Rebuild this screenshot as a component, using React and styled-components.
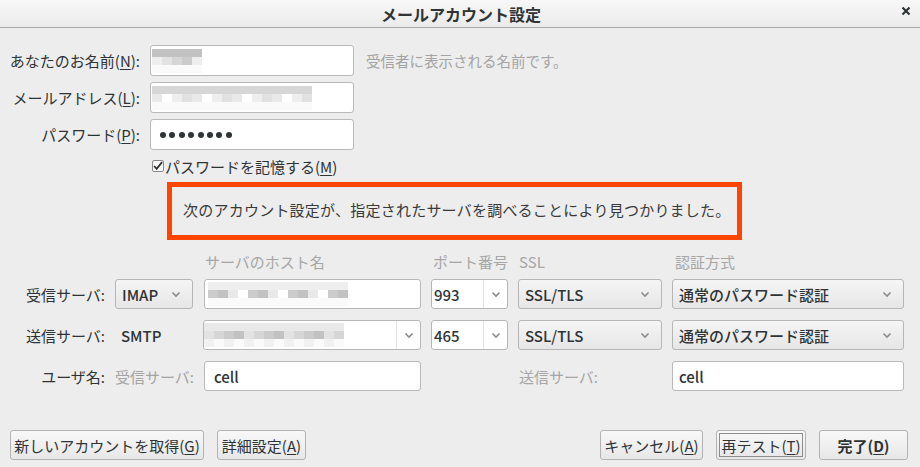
import React from 'react';
import styled, { createGlobalStyle } from 'styled-components';

const GlobalStyle = createGlobalStyle`
  html, body {
    margin: 0;
    padding: 0;
    background: #ededed;
  }
  body {
    font-family: "Noto Sans CJK JP", "Noto Sans", sans-serif;
    font-size: 15px;
    color: #2e3436;
  }
`;

const Window = styled.div`
  width: 920px;
  height: 467px;
  background: #ededed;
  display: flex;
  flex-direction: column;
  overflow: hidden;
`;

const TitleBar = styled.div`
  height: 27px;
  border-bottom: 1px solid #a9a9a9;
  background: linear-gradient(#f7f7f7, #ebebeb);
  display: flex;
  align-items: center;
  justify-content: center;
  position: relative;
`;

const Title = styled.div`
  font-weight: bold;
  font-size: 16px;
  color: #2e3436;
  line-height: 1;
  margin-left: 2px;
`;

const Close = styled.div`
  position: absolute;
  right: 9px;
  top: 5px;
  width: 11px;
  height: 11px;
  display: flex;
  align-items: center;
  justify-content: center;
`;

const Body = styled.div`
  flex: 1;
  display: flex;
  flex-direction: column;
  padding-top: 17px;
`;

const IdentityGrid = styled.div`
  display: grid;
  grid-template-columns: 140px 204px auto;
  grid-auto-rows: 31px;
  column-gap: 10px;
  row-gap: 6px;
  align-items: center;
`;

const Label = styled.div`
  text-align: right;
  white-space: nowrap;
  color: ${p => (p.muted ? '#a4a4a4' : '#2e3436')};
  font-size: 15px;
`;

const Hint = styled.div`
  color: #a4a4a4;
  font-size: 14.5px;
  margin-left: 2px;
`;

const Field = styled.div`
  height: ${p => p.h || 31}px;
  box-sizing: border-box;
  background: #fff;
  border: 1px solid #b9b9b9;
  border-radius: 3px;
  display: flex;
  align-items: center;
  padding-left: ${p => p.pad ?? 9}px;
  font-size: 15px;
  font-weight: 500;
  color: #2e3436;
  overflow: hidden;
  margin-left: ${p => p.shift || 0}px;
`;

const Dots = styled.div`
  display: flex;
  gap: 3.4px;
`;

const Dot = styled.span`
  width: 6px;
  height: 6px;
  border-radius: 50%;
  background: #2e3436;
`;

const Mosaic = styled.div`
  display: grid;
  grid-template-columns: repeat(${p => p.cols}, 10px);
  grid-auto-rows: 8px;
`;

const Cell = styled.span`
  background: ${p => p.shade};
`;

const CheckRow = styled.div`
  display: flex;
  align-items: center;
  padding-left: 152px;
  margin-top: 5px;
  height: 22px;
  font-size: 15px;
`;

const CheckBox = styled.span`
  width: 12px;
  height: 12px;
  box-sizing: border-box;
  border: 1px solid #8a8a8a;
  border-radius: 2px;
  background: #fafafa;
  display: inline-flex;
  align-items: center;
  justify-content: center;
  margin-right: 1px;
`;

const Key = styled.span`
  text-decoration: underline;
  text-underline-offset: 2px;
`;

const Notice = styled.div`
  margin: 5px 0 0 167px;
  width: 575px;
  height: 58px;
  box-sizing: border-box;
  border: 5px solid #ff4500;
  display: flex;
  align-items: center;
  padding: 0 0 4px 11px;
  font-size: 15px;
  letter-spacing: 0.23px;
  color: #3a3a3a;
  white-space: nowrap;
`;

const ServerGrid = styled.div`
  display: grid;
  grid-template-columns: 105px 78px 218px 77px 144px 232px;
  grid-template-rows: 14px 30px 30px 30px;
  column-gap: 10px;
  row-gap: 11px;
  align-items: center;
  margin-top: 14px;
`;

const ColHead = styled.div`
  color: #a6a6a6;
  font-size: 15px;
  padding-left: ${p => p.pad || 1}px;
  white-space: nowrap;
`;

const Plain = styled.div`
  font-weight: 500;
  font-size: 15px;
  padding-left: 6px;
`;

const Select = styled.div`
  height: 30px;
  box-sizing: border-box;
  border: 1px solid #b6b6b6;
  border-radius: 3px;
  background: linear-gradient(#f5f5f5, #e6e6e6);
  display: flex;
  align-items: center;
  justify-content: space-between;
  padding: 0 11px 0 6px;
  font-size: 15px;
  font-weight: 500;
  color: #2e3436;
  white-space: nowrap;
`;

const Combo = styled.div`
  height: 30px;
  box-sizing: border-box;
  border: 1px solid #b6b6b6;
  border-radius: 3px;
  background: #fff;
  display: flex;
  align-items: stretch;
  font-size: 15px;
  font-weight: 500;
  overflow: hidden;
`;

const ComboText = styled.div`
  flex: 1;
  display: flex;
  align-items: center;
  padding-left: ${p => p.pad ?? 2}px;
  overflow: hidden;
`;

const ComboButton = styled.div`
  width: 23px;
  border-left: 1px solid #e4e4e4;
  display: flex;
  align-items: center;
  justify-content: center;
`;

const ButtonBar = styled.div`
  margin-top: auto;
  margin-bottom: 7px;
  display: flex;
  align-items: center;
  padding: 0 12px 0 10px;
  gap: 13px;
`;

const Spacer = styled.div`
  flex: 1;
`;

const Button = styled.div`
  height: 30px;
  box-sizing: border-box;
  border: 1px solid #b3b3b3;
  border-radius: 3px;
  background: linear-gradient(#f8f8f8, #e7e7e7);
  display: flex;
  align-items: center;
  justify-content: center;
  width: ${p => p.w}px;
  font-size: 15px;
  font-weight: ${p => (p.bold ? 'bold' : 'normal')};
  color: #2e3436;
  white-space: nowrap;
  padding: 2px;
`;

const FocusRing = styled.div`
  width: 100%;
  height: 100%;
  box-sizing: border-box;
  border: 1px solid #8c8c8c;
  display: flex;
  align-items: center;
  justify-content: center;
`;

const Chevron = () => (
  <svg width="10" height="7" viewBox="0 0 10 7">
    <path d="M1.5 1.5 L5 5 L8.5 1.5" fill="none" stroke="#8b8b8b" strokeWidth="1.6" />
  </svg>
);

const Check = () => (
  <svg width="11" height="10" viewBox="0 0 11 10">
    <path d="M1.2 5 L4 8.2 L10 0.8" fill="none" stroke="#2e3436" strokeWidth="2" />
  </svg>
);

const CloseIcon = () => (
  <svg width="10" height="10" viewBox="0 0 10 10">
    <path d="M1.5 1.5 L8.5 8.5 M8.5 1.5 L1.5 8.5" stroke="#2e3436" strokeWidth="2.2" />
  </svg>
);

const mosaic = (rows, cols, seed) => {
  const shades = ['#ffffff', '#eeeeee', '#e2e2e2', '#d6d6d6', '#cbcbcb', '#c2c2c2', '#e9e9e9'];
  const out = [];
  for (let r = 0; r < rows; r++) {
    for (let c = 0; c < cols; c++) {
      const v = (c * 7 + r * 3 + seed * 5 + (c * r) % 4) % shades.length;
      out.push(r === rows - 1 ? (v % 2 ? '#f1f1f1' : '#fafafa') : shades[v]);
    }
  }
  return out;
};

const Blur = ({ rows, cols, seed }) => (
  <Mosaic cols={cols}>
    {mosaic(rows, cols, seed).map((s, i) => (
      <Cell key={i} shade={s} />
    ))}
  </Mosaic>
);

const App = () => (
  <>
    <GlobalStyle />
    <Window>
      <TitleBar>
        <Title>メールアカウント設定</Title>
        <Close><CloseIcon /></Close>
      </TitleBar>
      <Body>
        <IdentityGrid>
          <Label>あなたのお名前(<Key>N</Key>):</Label>
          <Field pad={1}><Blur rows={3} cols={5} seed={1} /></Field>
          <Hint>受信者に表示される名前です。</Hint>

          <Label>メールアドレス(<Key>L</Key>):</Label>
          <Field pad={1}><Blur rows={3} cols={16} seed={2} /></Field>
          <div />

          <Label>パスワード(<Key>P</Key>):</Label>
          <Field>
            <Dots>
              {Array.from({ length: 8 }, (_, i) => <Dot key={i} />)}
            </Dots>
          </Field>
          <div />
        </IdentityGrid>

        <CheckRow>
          <CheckBox><Check /></CheckBox>
          パスワードを記憶する(<Key>M</Key>)
        </CheckRow>

        <Notice>次のアカウント設定が、指定されたサーバを調べることにより見つかりました。</Notice>

        <ServerGrid>
          <div />
          <div />
          <ColHead pad={2}>サーバのホスト名</ColHead>
          <ColHead pad={2}>ポート番号</ColHead>
          <ColHead>SSL</ColHead>
          <ColHead pad={3}>認証方式</ColHead>

          <Label>受信サーバ:</Label>
          <Select>IMAP<Chevron /></Select>
          <Field h={30} pad={3} shift={1}><Blur rows={3} cols={14} seed={3} /></Field>
          <Combo>
            <ComboText pad={2}>993</ComboText>
            <ComboButton><Chevron /></ComboButton>
          </Combo>
          <Select>SSL/TLS<Chevron /></Select>
          <Select>通常のパスワード認証<Chevron /></Select>

          <Label>送信サーバ:</Label>
          <Plain>SMTP</Plain>
          <Combo>
            <ComboText pad={0}><Blur rows={3} cols={14} seed={4} /></ComboText>
            <ComboButton><Chevron /></ComboButton>
          </Combo>
          <Combo>
            <ComboText pad={2}>465</ComboText>
            <ComboButton><Chevron /></ComboButton>
          </Combo>
          <Select>SSL/TLS<Chevron /></Select>
          <Select>通常のパスワード認証<Chevron /></Select>

          <Label>ユーザ名:</Label>
          <Label muted>受信サーバ:</Label>
          <Field h={30} shift={1}>cell</Field>
          <div />
          <ColHead>送信サーバ:</ColHead>
          <Field h={30} pad={6}>cell</Field>
        </ServerGrid>

        <ButtonBar>
          <Button w={194}>新しいアカウントを取得(<Key>G</Key>)</Button>
          <Button w={89}>詳細設定(<Key>A</Key>)</Button>
          <Spacer />
          <Button w={103}>キャンセル(<Key>A</Key>)</Button>
          <Button w={90}><FocusRing>再テスト(<Key>T</Key>)</FocusRing></Button>
          <Button w={89} bold>完了(<Key>D</Key>)</Button>
        </ButtonBar>
      </Body>
    </Window>
  </>
);

export default App;
